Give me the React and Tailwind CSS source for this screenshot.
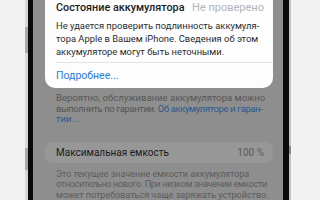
export default function App() {
  const font = { fontFamily: 'Roboto, "Noto Sans", sans-serif' };
  return (
    <div className="w-[320px] h-[200px] overflow-hidden bg-[#f2f2f2] flex" style={font}>
      <div className="w-[25px] shrink-0" />
      {/* left edge with volume buttons */}
      <div className="w-[3px] shrink-0 flex flex-col">
        <div className="h-[27px] bg-[#d6d6d6]" />
        <div className="h-[26px] bg-[#a9a9a9]" />
        <div className="h-[95px] bg-[#d6d6d6]" />
        <div className="h-[22px] bg-[#a9a9a9]" />
        <div className="flex-1 bg-[#d6d6d6]" />
      </div>
      <div className="w-[5px] shrink-0 bg-[#0a0a0a]" />

      {/* screen */}
      <div className="w-[250px] shrink-0 bg-[#8e8e8e] flex flex-col overflow-hidden">
        <div className="ml-[12px] w-[228px] bg-[#fdfdfd] rounded-b-[10px] pl-[11px] pr-[9px]">
          <div className="flex items-center justify-between h-[16px] whitespace-nowrap">
            <span className="text-[10.8px] font-medium text-[#1c1c1e]">Состояние аккумулятора</span>
            <span className="text-[11px] text-[#b4b4b8]">Не проверено</span>
          </div>
          <p className="mt-[3px] text-[9.4px] leading-[13px] text-[#2c2c2e] whitespace-nowrap">
            Не удается проверить подлинность аккумуля-<br />
            тора Apple в Вашем iPhone. Сведения об этом<br />
            аккумуляторе могут быть неточными.
          </p>
          <div className="mt-[4px] h-px bg-[#e4e4e6] -mr-[9px]" />
          <div className="h-[25px] flex items-center text-[10.5px] text-[#2f7bd8]">Подробнее...</div>
        </div>

        <p className="mt-[5px] ml-[23px] text-[9.5px] leading-[10.5px] text-[#565656] whitespace-nowrap">
          Вероятно, обслуживание аккумулятора можно<br />
          <span className="tracking-[-0.4px]">
            выполнить по гарантии. <span className="text-[#2c5a90]">Об аккумуляторе и гаран-</span>
          </span>
          <br />
          <span className="text-[#2c5a90]">тии...</span>
        </p>

        <div className="mt-[17px] ml-[12px] w-[228px] h-[25px] rounded-[8px] bg-[#979797] flex items-center justify-between pl-[11px] pr-[9px] whitespace-nowrap">
          <span className="text-[10px] text-[#1a1a1a]">Максимальная емкость</span>
          <span className="text-[10px] text-[#5a5a5a]">100 %</span>
        </div>

        <p className="mt-[6px] ml-[23px] text-[9px] leading-[10.5px] text-[#5c5c5c] whitespace-nowrap">
          Это текущее значение емкости аккумулятора<br />
          <span className="tracking-[-0.3px]">относительно нового. При низком значении емкости</span>
          <br />
          может потребоваться чаще заряжать устройство.
        </p>
      </div>

      <div className="w-[6px] shrink-0 bg-[#0a0a0a]" />
      <div className="w-[2px] shrink-0 flex flex-col">
        <div className="h-[146px] bg-[#c4c4c4]" />
        <div className="h-[8px] bg-[#8a8a8a]" />
        <div className="flex-1 bg-[#c4c4c4]" />
      </div>
      <div className="flex-1" />
    </div>
  );
}
